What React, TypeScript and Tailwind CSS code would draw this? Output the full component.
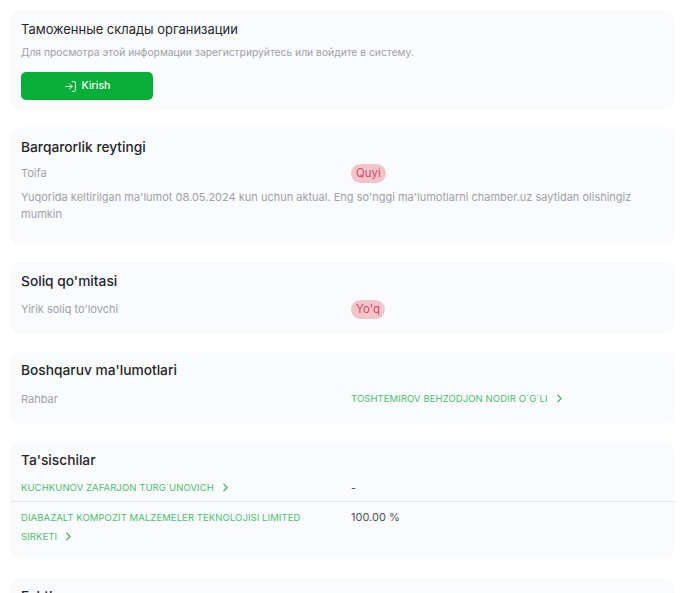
import React from "react";
import { ChevronRight, LogIn } from "lucide-react";

const Card: React.FC<{ title: string; className?: string; titleClassName?: string; children?: React.ReactNode }> = ({ title, className, titleClassName, children }) => (
  <div className={`rounded-[10px] bg-[#f9fbfd] pt-[10px] ${className ?? ""}`}>
    <h3 className={`px-[11px] leading-[20px] text-[#27272a] ${titleClassName ?? "text-[13.75px] font-medium"}`}>{title}</h3>
    {children}
  </div>
);

const Badge: React.FC<{ children: React.ReactNode }> = ({ children }) => (
  <span className="inline-block rounded-full bg-[#f3c5cb] px-[5px] text-[11.5px] leading-[19px] text-[#d9475f]">{children}</span>
);

const PersonLink: React.FC<{ children: React.ReactNode }> = ({ children }) => (
  <span className="text-[9.5px] leading-[18px] font-normal tracking-[0.08px] text-[#4cc06f]">
    {children}
    <ChevronRight className="ml-[5px] inline-block h-[13px] w-[13px] align-[-3px] text-[#4cb56b]" strokeWidth={2.25} />
  </span>
);

export default function App() {
  return (
    <div className="h-[593px] overflow-hidden bg-white pt-[10px] pr-[25px] pl-[10px] font-['Inter',sans-serif]">
      <div className="flex flex-col gap-[17px]">
        <Card title="Таможенные склады организации" titleClassName="-mt-[1px] text-[12.95px] font-normal" className="h-[100px]">
          <p className="mt-[5px] px-[11px] text-[10.3px] leading-[16px] text-[#a1a1aa]">
            Для просмотра этой информации зарегистрируйтесь или войдите в систему.
          </p>
          <div className="px-[11px] pt-[12px]">
            <button className="flex h-[28px] w-[132px] items-center justify-center gap-[5px] rounded-[5px] bg-[#09ae38] text-[10.5px] font-medium text-white">
              <LogIn className="h-[13px] w-[13px]" strokeWidth={1.75} />
              Kirish
            </button>
          </div>
        </Card>

        <Card title="Barqarorlik reytingi" className="h-[118px]">
          <div className="mt-[7px] grid grid-cols-[330px_1fr] items-center px-[11px] text-[11px] text-[#a1a1aa]">
            <span>Toifa</span>
            <span><Badge>Quyi</Badge></span>
          </div>
          <p className="mt-[6px] px-[11px] text-[11px] leading-[17px] text-[#a1a1aa]">
            Yuqorida keltirilgan ma'lumot 08.05.2024 kun uchun aktual. Eng so'nggi ma'lumotlarni chamber.uz saytidan olishingiz mumkin
          </p>
        </Card>

        <Card title="Soliq qo'mitasi" className="h-[72px] [&>h3]:-mt-[1px]">
          <div className="mt-[9px] grid grid-cols-[330px_1fr] items-center px-[11px] text-[11px] text-[#a1a1aa]">
            <span>Yirik soliq to'lovchi</span>
            <span><Badge>Yo'q</Badge></span>
          </div>
        </Card>

        <Card title="Boshqaruv ma'lumotlari" className="mt-[1px] h-[72px] [&>h3]:-mt-[2px]">
          <div className="mt-[10px] grid grid-cols-[330px_1fr] items-center px-[11px] text-[11px] text-[#a1a1aa]">
            <span>Rahbar</span>
            <PersonLink>TOSHTEMIROV BEHZODJON NODIR O`G`LI</PersonLink>
          </div>
        </Card>

        <Card title="Ta'sischilar" className="h-[118px] [&>h3]:-mt-[1px]">
          <div className="mt-[9px] grid grid-cols-[330px_1fr] items-center border-b border-[#e5e7eb] px-[11px] pb-[4px] text-[11px] text-[#52525b]">
            <PersonLink>KUCHKUNOV ZAFARJON TURG`UNOVICH</PersonLink>
            <span>-</span>
          </div>
          <div className="mt-[6px] grid grid-cols-[330px_1fr] px-[11px] text-[11px] text-[#52525b]">
            <div className="pr-[20px] leading-[18px]">
              <PersonLink>DIABAZALT KOMPOZIT MALZEMELER TEKNOLOJISI LIMITED SIRKETI</PersonLink>
            </div>
            <span className="pt-[1px]">100.00 %</span>
          </div>
        </Card>

        <Card title="Faktlar" className="mt-[2px] h-[80px] [&>h3]:-mt-[2px]" />
      </div>
    </div>
  );
}
